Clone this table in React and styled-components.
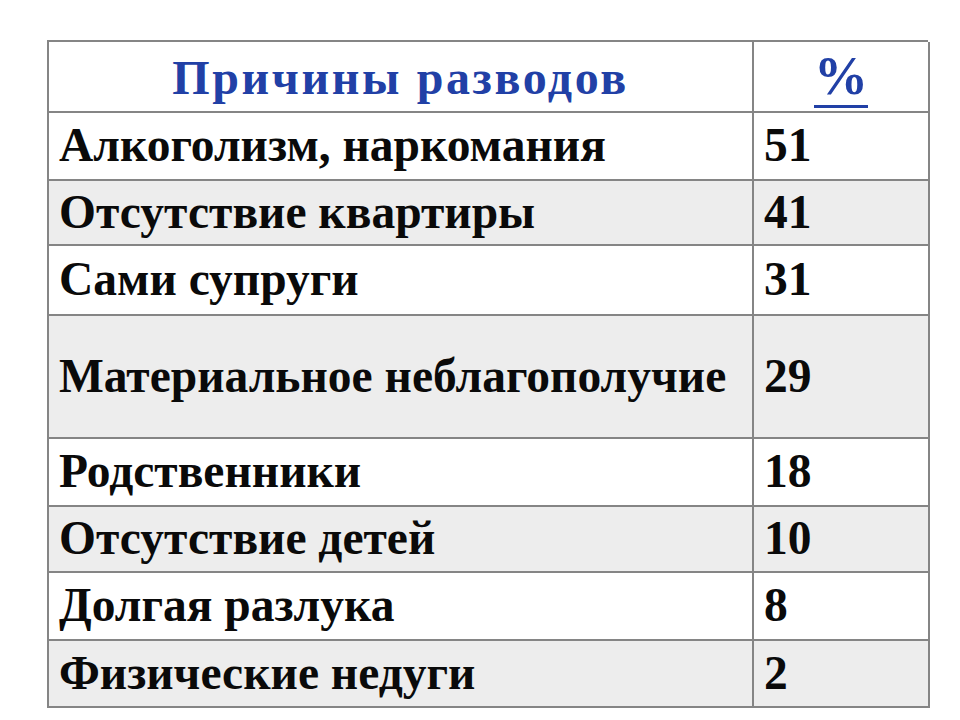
import React from "react";
import styled, { createGlobalStyle } from "styled-components";

const Global = createGlobalStyle`
  html, body { margin: 0; padding: 0; background: #ffffff; }
  body { font-family: "Liberation Serif", "Times New Roman", serif; }
`;

const Page = styled.div`
  width: 960px;
  height: 720px;
  padding: 40px 0 0 47px;
  box-sizing: border-box;
`;

const Table = styled.div`
  display: grid;
  grid-template-columns: 705px 176px;
  width: 881px;
  border-top: 2px solid #858585;
  border-left: 2px solid #858585;
  box-sizing: border-box;
`;

const Cell = styled.div`
  box-sizing: border-box;
  height: ${(p) => p.$h}px;
  border-right: 2px solid #858585;
  border-bottom: 2px solid #858585;
  background: ${(p) => (p.$shade ? "#ededed" : "#ffffff")};
  display: flex;
  align-items: center;
  justify-content: ${(p) => (p.$center ? "center" : "flex-start")};
  padding: ${(p) => (p.$center ? "0" : "0 0 2px 10px")};
  font-family: "Liberation Serif", "Times New Roman", serif;
  font-weight: 700;
  font-size: 47.5px;
  color: #0a0a0a;
  white-space: nowrap;
`;

const HeadText = styled.span`
  color: #2140a6;
  font-size: 48px;
  font-weight: 700;
  letter-spacing: 2.6px;
  padding-top: 2px;
`;

const Percent = styled.span`
  color: #2140a6;
  font-size: 54px;
  font-weight: 700;
  line-height: 1;
  padding: 4px 0 2px;
  border-bottom: 3px solid #2140a6;
`;

const rows = [
  ["Алкоголизм, наркомания", "51", 68],
  ["Отсутствие квартиры", "41", 65],
  ["Сами супруги", "31", 70],
  ["Материальное неблагополучие", "29", 123],
  ["Родственники", "18", 68],
  ["Отсутствие детей", "10", 66],
  ["Долгая разлука", "8", 68],
  ["Физические недуги", "2", 67],
];

export default function App() {
  return (
    <>
      <Global />
      <Page>
        <Table>
          <Cell $h={71} $center>
            <HeadText>Причины разводов</HeadText>
          </Cell>
          <Cell $h={71} $center>
            <Percent>%</Percent>
          </Cell>
          {rows.map(([label, value, h], i) => (
            <React.Fragment key={label}>
              <Cell $h={h} $shade={i % 2 === 1}>{label}</Cell>
              <Cell $h={h} $shade={i % 2 === 1}>{value}</Cell>
            </React.Fragment>
          ))}
        </Table>
      </Page>
    </>
  );
}
